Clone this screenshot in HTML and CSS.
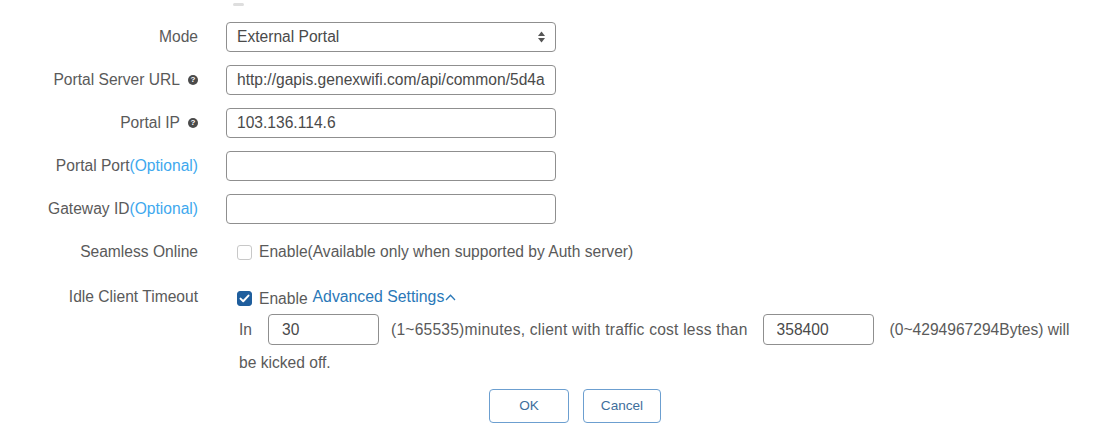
FILE: index.html
```html
<!DOCTYPE html>
<html>
<head>
<meta charset="utf-8">
<link rel="stylesheet" href="styles.css">
</head>
<body>
<div class="page">
  <div class="top-dash"></div>
  <div class="form">
    <div class="row">
      <div class="label">Mode</div>
      <div class="select">
        <span>External Portal</span>
        <svg class="arrows" width="7" height="12" viewBox="0 0 7 12"><polygon points="0,5 3.5,0.5 7,5" fill="#555"/><polygon points="0,7 3.5,11.5 7,7" fill="#555"/></svg>
      </div>
    </div>
    <div class="row">
      <div class="label">Portal Server URL<span class="help">?</span></div>
      <input class="field" type="text" value="http://gapis.genexwifi.com/api/common/5d4a6b2c">
    </div>
    <div class="row">
      <div class="label">Portal IP<span class="help">?</span></div>
      <input class="field" type="text" value="103.136.114.6">
    </div>
    <div class="row">
      <div class="label">Portal Port<span class="opt">(Optional)</span></div>
      <input class="field" type="text" value="">
    </div>
    <div class="row">
      <div class="label">Gateway ID<span class="opt">(Optional)</span></div>
      <input class="field" type="text" value="">
    </div>
    <div class="row row-seamless">
      <div class="label">Seamless Online</div>
      <div class="check-wrap">
        <span class="cb"></span>
        <span class="cb-text">Enable(Available only when supported by Auth server)</span>
      </div>
    </div>
    <div class="row row-idle">
      <div class="label">Idle Client Timeout</div>
      <div class="check-wrap">
        <span class="cb cb-on"><svg width="11" height="9" viewBox="0 0 11 9"><path d="M1.5 4.6 L4.2 7.2 L9.5 1.6" fill="none" stroke="#fff" stroke-width="2" stroke-linecap="round" stroke-linejoin="round"/></svg></span>
        <span class="cb-text">Enable</span>
        <span class="adv">Advanced Settings<svg class="chev" width="11" height="7" viewBox="0 0 11 7"><path d="M1 6 L5.5 1.2 L10 6" fill="none" stroke="#2a78b8" stroke-width="1.3"/></svg></span>
      </div>
    </div>
    <div class="detail"><span class="seg">In</span><input class="small first" type="text" value="30"><span class="seg mid">(1~65535)minutes, client with traffic cost less than</span><input class="small second" type="text" value="358400"><span class="seg">(0~4294967294Bytes) will be kicked off.</span></div>
    <div class="buttons">
      <button class="btn btn-ok">OK</button>
      <button class="btn btn-cancel">Cancel</button>
    </div>
  </div>
</div>
</body>
</html>
```

FILE: styles.css
```css
* { box-sizing: border-box; }
html, body { margin: 0; padding: 0; background: #fff; }
body {
  font-family: "Liberation Sans", Arial, Helvetica, sans-serif;
  font-size: 15.6px;
  color: #5a5a5a;
}
.page { width: 1094px; height: 443px; overflow: hidden; }
.top-dash {
  width: 11px; height: 3px; margin: 3px 0 0 233px;
  background: #dedede; border-radius: 2px;
}
.form { margin-top: 16px; }
.row {
  display: flex; align-items: center; height: 30px; margin-bottom: 13px;
}
.label {
  width: 198px; flex: none; margin-right: 28px;
  text-align: right; white-space: nowrap;
  display: flex; justify-content: flex-end; align-items: center;
}
.help {
  display: inline-flex; align-items: center; justify-content: center;
  width: 10px; height: 10px; border-radius: 50%;
  background: #4a4a4a; color: #fff;
  font-size: 8px; font-weight: bold; line-height: 1;
  margin-left: 8px;
}
.opt { color: #3ea8ee; }
.select, .field {
  width: 330px; height: 30px;
  border: 1px solid #8f8f8f; border-radius: 4px;
  background: #fff;
}
.select {
  display: flex; align-items: center; justify-content: space-between;
  padding: 0 10px 0 10px; color: #4a4a4a;
}
.arrows { display: block; }
.field {
  font: inherit; color: #4a4a4a;
  padding: 0 10px; outline: none;
}
.row-seamless { margin-top: 12px; margin-bottom: 0; height: 30px; }
.row-idle { margin-top: 15px; margin-bottom: 0; height: 30px; }
.check-wrap { display: flex; align-items: center; padding-left: 11px; white-space: nowrap; }
.cb {
  width: 15px; height: 15px; border: 1px solid #c8c8c8; border-radius: 3px;
  background: #fff; display: inline-flex; align-items: center; justify-content: center;
  margin-right: 7px; flex: none;
}
.row-idle .cb { margin-top: 3px; }
.row-idle .cb-text { margin-top: 3px; }
.cb-on { background: #1f5e9d; border-color: #1f5e9d; }
.cb-on svg { display: block; }
.adv {
  color: #2a78b8; margin-left: 5px; display: inline-flex; align-items: center;
  font-size: 15.8px;
}
.chev { margin-left: 1px; margin-top: 1px; }
.detail {
  margin-left: 239px; width: 838px; line-height: 32px; margin-top: 1px;
}
.seg { vertical-align: middle; }
.mid { letter-spacing: 0.22px; }
.small {
  font: inherit; color: #4a4a4a;
  width: 111px; height: 31px; vertical-align: middle;
  border: 1px solid #8f8f8f; border-radius: 4px;
  padding: 0 13px; outline: none; background: #fff;
}
.small.first { margin: 0 12px 0 16px; }
.small.second { margin: 0 16px 0 15px; }
.buttons { display: flex; gap: 14px; margin: 10px 0 0 489px; }
.btn {
  font-family: "Liberation Sans", Arial, sans-serif; font-size: 13.6px;
  color: #3f6f9c; background: #fff;
  border: 1.5px solid #6c9fd0; border-radius: 4px;
  height: 34px; width: 80px; padding: 0; cursor: pointer;
}
.btn-cancel { width: 78px; }
```
